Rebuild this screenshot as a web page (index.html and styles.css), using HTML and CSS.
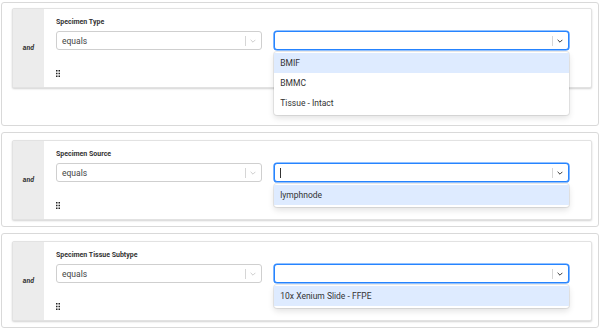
FILE: index.html
```html
<!DOCTYPE html>
<html>
<head>
<meta charset="utf-8">
<link rel="stylesheet" href="styles.css">
</head>
<body>
<div class="panel panel-tall">
  <div class="card">
    <div class="conj">and</div>
    <div class="content">
      <div class="label">Specimen Type</div>
      <div class="row">
        <div class="select">
          <span class="value">equals</span>
          <span class="sep"></span>
          <svg class="chev" viewBox="0 0 10 6"><path d="M1 1l4 4 4-4" fill="none" stroke="currentColor" stroke-width="1.4"/></svg>
        </div>
        <div class="select focus">
          <span class="value"></span>
          <span class="sep"></span>
          <svg class="chev" viewBox="0 0 10 6"><path d="M1 1l4 4 4-4" fill="none" stroke="currentColor" stroke-width="1.6"/></svg>
          <div class="menu">
            <div class="opt active">BMIF</div>
            <div class="opt">BMMC</div>
            <div class="opt">Tissue - Intact</div>
          </div>
        </div>
      </div>
      <svg class="grip" viewBox="0 0 4 7"><g fill="#222"><rect x="0" y="0" width="1.5" height="1.5"/><rect x="2.5" y="0" width="1.5" height="1.5"/><rect x="0" y="2.75" width="1.5" height="1.5"/><rect x="2.5" y="2.75" width="1.5" height="1.5"/><rect x="0" y="5.5" width="1.5" height="1.5"/><rect x="2.5" y="5.5" width="1.5" height="1.5"/></g></svg>
    </div>
  </div>
</div>

<div class="panel">
  <div class="card">
    <div class="conj">and</div>
    <div class="content">
      <div class="label">Specimen Source</div>
      <div class="row">
        <div class="select">
          <span class="value">equals</span>
          <span class="sep"></span>
          <svg class="chev" viewBox="0 0 10 6"><path d="M1 1l4 4 4-4" fill="none" stroke="currentColor" stroke-width="1.4"/></svg>
        </div>
        <div class="select focus">
          <span class="value"><span class="caret"></span></span>
          <span class="sep"></span>
          <svg class="chev" viewBox="0 0 10 6"><path d="M1 1l4 4 4-4" fill="none" stroke="currentColor" stroke-width="1.6"/></svg>
          <div class="menu">
            <div class="opt active">lymphnode</div>
          </div>
        </div>
      </div>
      <svg class="grip" viewBox="0 0 4 7"><g fill="#222"><rect x="0" y="0" width="1.5" height="1.5"/><rect x="2.5" y="0" width="1.5" height="1.5"/><rect x="0" y="2.75" width="1.5" height="1.5"/><rect x="2.5" y="2.75" width="1.5" height="1.5"/><rect x="0" y="5.5" width="1.5" height="1.5"/><rect x="2.5" y="5.5" width="1.5" height="1.5"/></g></svg>
    </div>
  </div>
</div>

<div class="panel">
  <div class="card">
    <div class="conj">and</div>
    <div class="content">
      <div class="label">Specimen Tissue Subtype</div>
      <div class="row">
        <div class="select">
          <span class="value">equals</span>
          <span class="sep"></span>
          <svg class="chev" viewBox="0 0 10 6"><path d="M1 1l4 4 4-4" fill="none" stroke="currentColor" stroke-width="1.4"/></svg>
        </div>
        <div class="select focus">
          <span class="value"></span>
          <span class="sep"></span>
          <svg class="chev" viewBox="0 0 10 6"><path d="M1 1l4 4 4-4" fill="none" stroke="currentColor" stroke-width="1.6"/></svg>
          <div class="menu">
            <div class="opt active">10x Xenium Slide - FFPE</div>
          </div>
        </div>
      </div>
      <svg class="grip" viewBox="0 0 4 7"><g fill="#222"><rect x="0" y="0" width="1.5" height="1.5"/><rect x="2.5" y="0" width="1.5" height="1.5"/><rect x="0" y="2.75" width="1.5" height="1.5"/><rect x="2.5" y="2.75" width="1.5" height="1.5"/><rect x="0" y="5.5" width="1.5" height="1.5"/><rect x="2.5" y="5.5" width="1.5" height="1.5"/></g></svg>
    </div>
  </div>
</div>
</body>
</html>
```
FILE: styles.css
```css
* { box-sizing: border-box; }
html, body {
  margin: 0;
  padding: 0;
  background: #fff;
  font-family: Roboto, "Noto Sans", sans-serif;
  color: #333;
}
body {
  padding-top: 2px;
  display: flex;
  flex-direction: column;
  gap: 6px;
}
.panel {
  margin: 0 1px;
  border: 1px solid #d9d9d9;
  border-radius: 3px;
  padding: 7px 6px 6px 10px;
}
.panel-tall {
  padding-top: 5px;
  padding-bottom: 37px;
}
.card {
  display: flex;
  border: 1px solid #e2e2e2;
  border-radius: 2px;
  box-shadow: 0 1px 2px rgba(0,0,0,0.18);
  background: #fff;
}
.conj {
  width: 31px;
  background: #ececec;
  display: flex;
  align-items: center;
  justify-content: center;
  font-size: 7px;
  font-weight: bold;
  font-style: italic;
  color: #333;
}
.content {
  flex: 1;
  padding: 8px 22px 10px 12px;
  display: flex;
  flex-direction: column;
}
.label {
  font-size: 7px;
  font-weight: bold;
  line-height: 10px;
  color: #333;
}
.row {
  display: grid;
  grid-template-columns: 7fr 10fr;
  gap: 12px;
  margin-top: 4px;
}
.select {
  position: relative;
  height: 19px;
  border: 1px solid #cfcfcf;
  border-radius: 3px;
  display: flex;
  align-items: center;
  background: #fff;
}
.select .value {
  flex: 1;
  padding-left: 5px;
  font-size: 8.5px;
  color: #444;
  display: flex;
  align-items: center;
}
.sep {
  width: 1px;
  height: 10px;
  background: #d6d6d6;
}
.chev {
  width: 6px;
  height: 4px;
  margin: 0 5px 0 4px;
  color: #c4c4c4;
}
.select.focus {
  border-color: #2684ff;
  box-shadow: 0 0 0 0.6px #2684ff;
}
.select.focus .chev {
  color: #333;
}
.caret {
  display: inline-block;
  width: 1px;
  height: 10px;
  background: #333;
}
.menu {
  position: absolute;
  top: 20px;
  left: -1px;
  right: -1px;
  background: #fff;
  border-radius: 3px;
  box-shadow: 0 0 0 1px rgba(0,0,0,0.08), 0 3px 6px rgba(0,0,0,0.12);
  padding: 1px 0 2px;
  z-index: 2;
}
.opt {
  height: 20px;
  display: flex;
  align-items: center;
  padding-left: 6px;
  font-size: 8.5px;
  color: #333;
}
.opt.active {
  background: #deebff;
}
.grip {
  width: 4px;
  height: 7px;
  margin-top: 20px;
}
```
